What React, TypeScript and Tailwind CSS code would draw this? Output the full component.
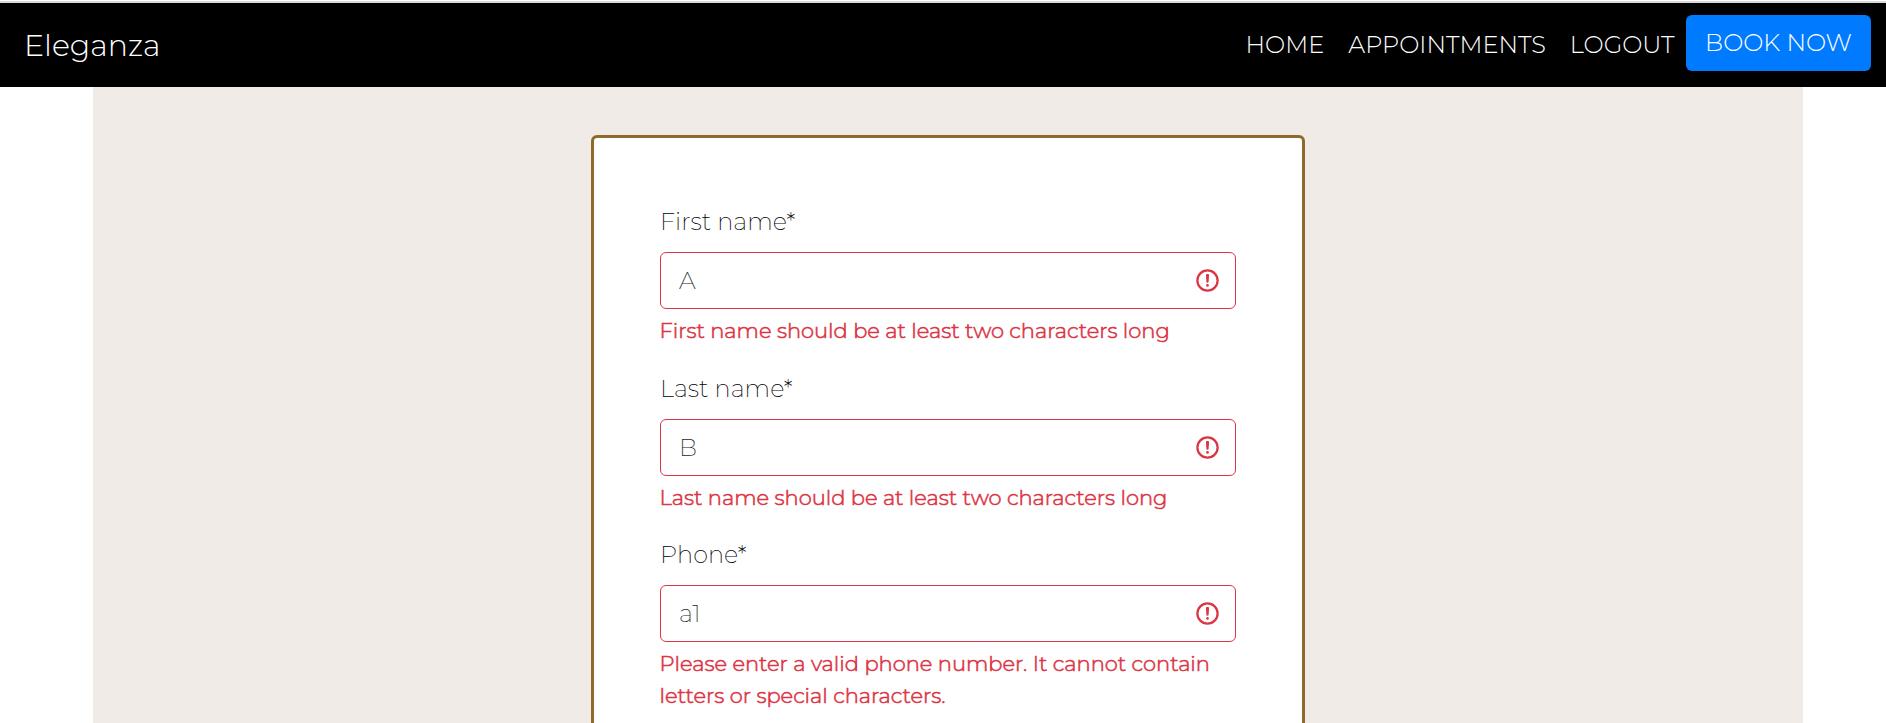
type Field = { id: string; label: string; value: string; error: string };

const fields: Field[] = [
  { id: "first", label: "First name*", value: "A", error: "First name should be at least two characters long" },
  { id: "last", label: "Last name*", value: "B", error: "Last name should be at least two characters long" },
  {
    id: "phone",
    label: "Phone*",
    value: "a1",
    error: "Please enter a valid phone number. It cannot contain letters or special characters.",
  },
];

const links = ["HOME", "APPOINTMENTS", "LOGOUT"];

function AlertIcon() {
  return (
    <svg viewBox="0 0 12 12" className="h-[27px] w-[27px] shrink-0" fill="none" stroke="#dc3545">
      <circle cx="6" cy="6" r="4.5" />
      <path strokeLinejoin="round" d="M5.8 3.6h.4L6 6.5z" />
      <circle cx="6" cy="8.2" r=".6" fill="#dc3545" stroke="none" />
    </svg>
  );
}

function FormField({ field }: { field: Field }) {
  return (
    <div className="mb-6">
      <label htmlFor={field.id} className="mb-3 block leading-9 font-extralight text-black">
        {field.label}
      </label>
      <div className="flex h-[57px] items-center rounded-md border border-[#dc3545] bg-white pr-3.5 pl-[18px]">
        <input
          id={field.id}
          defaultValue={field.value}
          className="h-9 min-w-0 flex-1 font-extralight text-[#212529] outline-none"
        />
        <AlertIcon />
      </div>
      <p className="mt-1.5 -ml-[0.5px] text-[21px] leading-[31.5px] font-light text-[#dc3545] [-webkit-text-stroke:0.6px_#dc3545]">
        {field.error}
      </p>
    </div>
  );
}

export default function App() {
  return (
    <div className="flex h-screen flex-col overflow-hidden bg-white font-['Montserrat','Inter',sans-serif] text-2xl font-light">
      <div className="mt-px h-0.5 shrink-0 bg-[#dadada]" />
      <nav className="flex h-[84px] shrink-0 items-center justify-between bg-black pr-[15px] pl-6 text-white">
        <a href="#" className="text-[30px] leading-[45px]">
          Eleganza
        </a>
        <div className="flex items-center">
          <div className="-mr-[0.5px] flex">
            {links.map((l) => (
              <a key={l} href="#" className="px-3 leading-9">
                {l}
              </a>
            ))}
          </div>
          <button className="mb-1 h-14 w-[185px] rounded-md bg-[#007bff] leading-9">BOOK NOW</button>
        </div>
      </nav>
      <main className="mr-[83px] ml-[93px] flex min-h-0 flex-1 justify-center bg-[#f0ebe7] pt-12">
        <form className="h-[900px] w-[714px] shrink-0 rounded-md border-[3px] border-[#906a2c] bg-white p-[66px]">
          {fields.map((f) => (
            <FormField key={f.id} field={f} />
          ))}
        </form>
      </main>
    </div>
  );
}
